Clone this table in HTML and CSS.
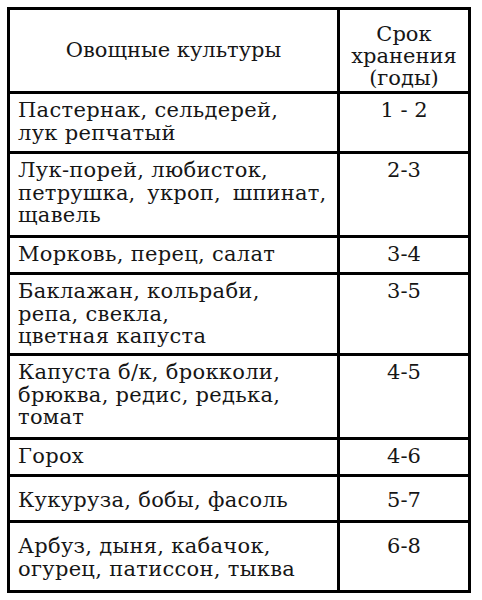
FILE: index.html
```html
<!DOCTYPE html>
<html lang="ru">
<head>
<meta charset="utf-8">
<title>Сроки хранения семян</title>
<link rel="stylesheet" href="styles.css">
</head>
<body>
<div class="table">
  <div class="cell head head-name">Овощные культуры</div>
  <div class="cell head head-term">Срок<br>хранения<br>(годы)</div>

  <div class="cell name">Пастернак, сельдерей,<br>лук репчатый</div>
  <div class="cell term">1 - 2</div>

  <div class="cell name">Лук-порей, любисток,<br><span class="spread">петрушка, укроп, шпинат,</span><br>щавель</div>
  <div class="cell term">2-3</div>

  <div class="cell name">Морковь, перец, салат</div>
  <div class="cell term">3-4</div>

  <div class="cell name">Баклажан, кольраби,<br>репа, свекла,<br>цветная капуста</div>
  <div class="cell term">3-5</div>

  <div class="cell name">Капуста б/к, брокколи,<br>брюква, редис, редька,<br>томат</div>
  <div class="cell term">4-5</div>

  <div class="cell name">Горох</div>
  <div class="cell term">4-6</div>

  <div class="cell name loose">Кукуруза, бобы, фасоль</div>
  <div class="cell term loose">5-7</div>

  <div class="cell name loose">Арбуз, дыня, кабачок,<br>огурец, патиссон, тыква</div>
  <div class="cell term loose">6-8</div>
</div>
</body>
</html>
```

FILE: styles.css
```css
html, body {
  margin: 0;
  padding: 0;
  background: #ffffff;
}

body {
  padding: 7px 0 0 7px;
  font-family: "DejaVu Serif", serif;
  font-size: 21px;
  line-height: 22.5px;
  color: #161616;
}

.table {
  display: grid;
  grid-template-columns: 327px 128px;
  grid-template-rows: 81px 57px 81px 34px 78px 81px 34px 43px 67px;
  gap: 3px;
  width: max-content;
  background: #000000;
  border: 3px solid #000000;
}

.cell {
  background: #ffffff;
  padding-top: 5px;
}

.name {
  padding-left: 8px;
  letter-spacing: 0.3px;
}

.spread {
  letter-spacing: 0.2px;
  word-spacing: 5px;
}

.term {
  text-align: center;
}

.head {
  display: flex;
  align-items: center;
  justify-content: center;
  text-align: center;
  padding-top: 0;
}

.head-term {
  align-items: flex-start;
  padding-top: 13px;
  line-height: 22px;
}

.loose {
  padding-top: 12px;
}
```
